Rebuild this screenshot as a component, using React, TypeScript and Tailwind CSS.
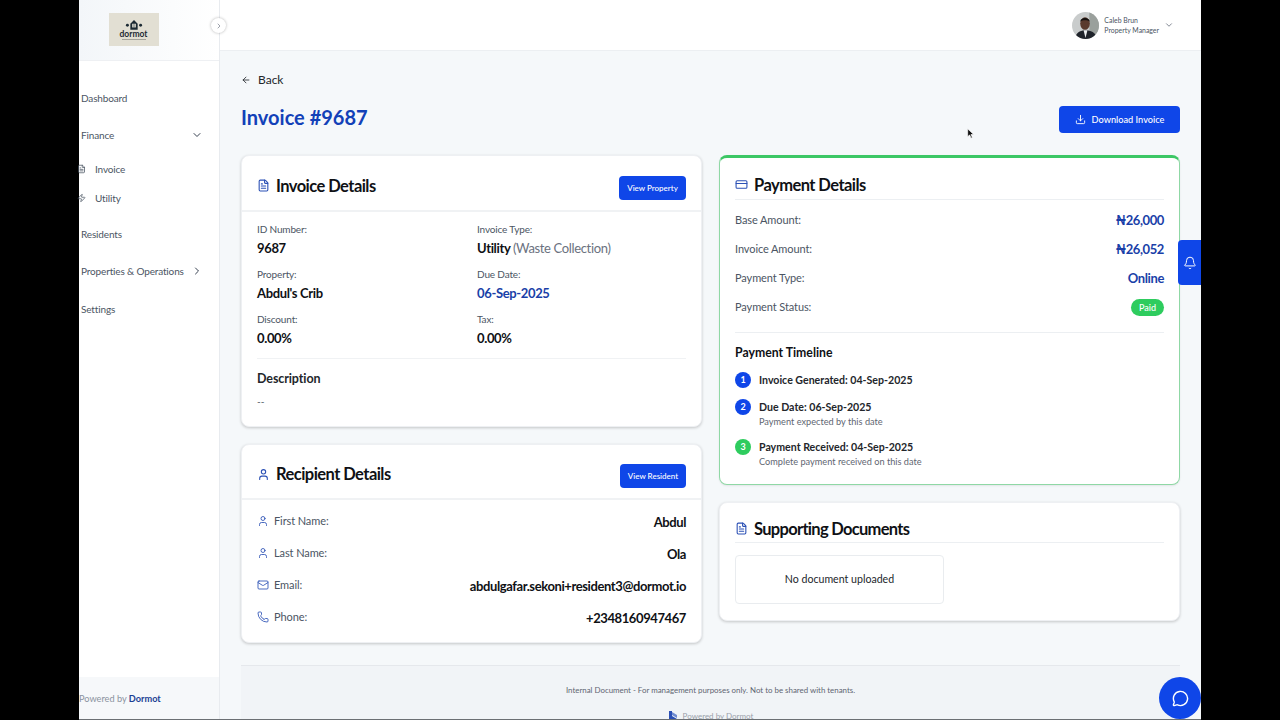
import React from "react";
import { ArrowLeft, Bell, ChevronDown, ChevronRight, CreditCard, Download, FileText, Mail, MessageCircle, Phone, User, Zap } from "lucide-react";

const titleClass = "text-[16.5px] leading-6 font-bold tracking-[-0.55px] text-[#0f1115]";

const NavItem: React.FC<{ label: string; chevron?: "down" | "right"; className?: string }> = ({ label, chevron, className }) => (
    <div className={`flex items-center justify-between pl-[2px] pr-[16px] text-[10px] tracking-[-0.15px] leading-4 text-[#4b5563] ${className ?? ""}`}>
        <span>{label}</span>
        {chevron === "down" && <ChevronDown className="w-3 h-3 text-[#374151]" />}
        {chevron === "right" && <ChevronRight className="w-3 h-3 text-[#374151]" />}
    </div>
);

const Sidebar = () => (
    <aside className="relative w-[141px] shrink-0 h-full bg-white border-r border-[#e8ebef] flex flex-col">
        <div className="h-[61px] shrink-0 flex justify-center pt-[13px] pr-[31px] bg-gradient-to-r from-[#f3f6f9] to-white border-b border-[#eef0f3]">
            <div className="w-[50px] h-[33px] bg-[#e2dfd3] flex flex-col items-center pt-[6px]">
                <svg viewBox="0 0 30 14" className="w-[22px] h-[11px]">
                    <path d="M10 6 L15 1 L20 6 V14 H10 Z" fill="#1c2a33" />
                    <rect x="12.5" y="6" width="5" height="5" fill="#e2dfd3" />
                    <rect x="14.6" y="6" width="0.8" height="5" fill="#1c2a33" />
                    <circle cx="6" cy="8" r="2" fill="#1c2a33" />
                    <circle cx="24" cy="8" r="2" fill="#1c2a33" />
                </svg>
                <span className="text-[8.5px] leading-[8px] font-bold text-[#1c2a33]">dormot</span>
                <span className="mt-[1px] w-[24px] h-[1px] bg-[#a5a49b]" />
            </div>
        </div>
        <button className="absolute left-[132px] top-[18px] w-[15px] h-[15px] rounded-full bg-white shadow-[0_0_3px_rgba(0,0,0,0.3)] flex items-center justify-center">
            <ChevronRight className="w-2 h-2 text-[#6b7280]" />
        </button>
        <nav className="flex flex-col pt-[29px]">
            <NavItem label="Dashboard" />
            <NavItem label="Finance" chevron="down" className="mt-[21px]" />
            <div className="mt-[18px] flex items-center gap-[9px] text-[10px] tracking-[-0.15px] leading-4 text-[#4b5563] -ml-[2px]">
                <FileText className="w-[9px] h-[10px]" />
                <span>Invoice</span>
            </div>
            <div className="mt-[13px] flex items-center gap-[9px] text-[10px] tracking-[-0.15px] leading-4 text-[#4b5563] -ml-[2px]">
                <Zap className="w-[9px] h-[10px]" />
                <span>Utility</span>
            </div>
            <NavItem label="Residents" className="mt-[20px]" />
            <NavItem label="Properties & Operations" chevron="right" className="mt-[21px]" />
            <NavItem label="Settings" className="mt-[22px]" />
        </nav>
        <div className="mt-auto h-[43px] bg-[#f6f8fa] flex items-center text-[9.2px] text-[#8b93a0]">
            Powered by&nbsp;<span className="font-bold text-[#1c3f94]">Dormot</span>
        </div>
    </aside>
);

const TopBar = () => (
    <header className="h-[51px] shrink-0 bg-white border-b border-[#eceff2] flex items-center justify-end pr-[27px]">
        <svg viewBox="0 0 28 28" className="w-[27px] h-[27px] rounded-full">
            <rect width="28" height="28" fill="#c9cccc" />
            <rect x="18" width="10" height="28" fill="#9aa09c" />
            <path d="M3 28 C4 21 9 19 14 19 C19 19 25 21 26 28 Z" fill="#20242b" />
            <path d="M12 19 L14 27 L16 19 Z" fill="#eef0f1" />
            <ellipse cx="13.5" cy="12" rx="5" ry="6.5" fill="#5a3a2c" />
            <path d="M8.5 10 C9 5 18 5 18.5 10 C16 8 11 8 8.5 10 Z" fill="#16110f" />
        </svg>
        <div className="ml-[5px] flex flex-col text-[6.9px] leading-[10px] text-[#4b5563]">
            <span>Caleb Brun</span>
            <span>Property Manager</span>
        </div>
        <ChevronDown className="ml-[5px] w-[10px] h-[10px] text-[#6b7280]" />
    </header>
);

const Field: React.FC<{ label: string; children: React.ReactNode }> = ({ label, children }) => (
    <div className="h-[45px]">
        <div className="text-[10px] tracking-[-0.15px] leading-[14px] text-[#4b5563]">{label}</div>
        <div className="mt-[3px] text-[13px] tracking-[-0.35px] leading-[18px] font-bold text-[#0f1115]">{children}</div>
    </div>
);

const InvoiceDetails = () => (
    <section className="h-[272px] bg-white rounded-lg border border-[#eef0f3] shadow-[0_1px_3px_rgba(0,0,0,0.2)]">
        <div className="h-[56px] flex items-center justify-between px-[15px] pt-[5px] border-b-2 border-[#f0f2f4]">
            <div className="flex items-center gap-[6px]">
                <FileText className="w-[13px] h-[13px] text-[#2b50b5]" />
                <h2 className={titleClass}>Invoice Details</h2>
            </div>
            <button className="mt-[4px] w-[67px] h-6 rounded bg-[#0f46e8] text-white text-[8px] font-medium">View Property</button>
        </div>
        <div className="px-[15px] pt-[10px]">
            <div className="grid grid-cols-[220px_1fr]">
                <Field label="ID Number:">9687</Field>
                <Field label="Invoice Type:">Utility <span className="font-normal text-[#6b7280]">(Waste Collection)</span></Field>
                <Field label="Property:">Abdul's Crib</Field>
                <Field label="Due Date:"><span className="text-[#1a3fa8]">06-Sep-2025</span></Field>
                <Field label="Discount:">0.00%</Field>
                <Field label="Tax:">0.00%</Field>
            </div>
            <div className="mt-[1px] border-t border-[#f0f2f4] pt-[11px]">
                <div className="text-[12.5px] tracking-[-0.1px] leading-[18px] font-bold text-[#23262b]">Description</div>
                <div className="mt-[5px] text-[10px] leading-4 text-[#4b5563]">--</div>
            </div>
        </div>
    </section>
);

const recipientRows = [
    { icon: User, label: "First Name:", value: "Abdul" },
    { icon: User, label: "Last Name:", value: "Ola" },
    { icon: Mail, label: "Email:", value: "abdulgafar.sekoni+resident3@dormot.io" },
    { icon: Phone, label: "Phone:", value: "+2348160947467" },
];

const RecipientDetails = () => (
    <section className="h-[199px] bg-white rounded-lg border border-[#eef0f3] shadow-[0_1px_3px_rgba(0,0,0,0.2)]">
        <div className="h-[55px] flex items-center justify-between px-[15px] pt-[5px] border-b-2 border-[#f0f2f4]">
            <div className="flex items-center gap-[6px]">
                <User className="w-[13px] h-[13px] text-[#2b50b5]" />
                <h2 className={titleClass}>Recipient Details</h2>
            </div>
            <button className="mt-[4px] w-[66px] h-6 rounded bg-[#0f46e8] text-white text-[8px] font-medium">View Resident</button>
        </div>
        <div className="px-[15px] pt-[6px]">
            {recipientRows.map(row => {
                const Icon = row.icon;
                return (
                    <div key={row.label} className="h-8 flex items-center justify-between">
                        <div className="flex items-center gap-[5px] text-[11px] tracking-[-0.1px] text-[#4b5563] -mt-[2px]">
                            <Icon className="w-3 h-3 text-[#2b50b5]" strokeWidth={1.7} />
                            <span>{row.label}</span>
                        </div>
                        <div className="mt-[2px] text-[13px] tracking-[-0.4px] font-bold text-[#0f1115]">{row.value}</div>
                    </div>
                );
            })}
        </div>
    </section>
);

const amountRows = [
    { label: "Base Amount:", value: "₦26,000" },
    { label: "Invoice Amount:", value: "₦26,052" },
    { label: "Payment Type:", value: "Online" },
];

const timeline = [
    { n: 1, title: "Invoice Generated: 04-Sep-2025", color: "bg-[#0f46e8]", gap: "h-[27px]" },
    { n: 2, title: "Due Date: 06-Sep-2025", sub: "Payment expected by this date", color: "bg-[#0f46e8]", gap: "h-[40px]" },
    { n: 3, title: "Payment Received: 04-Sep-2025", sub: "Complete payment received on this date", color: "bg-[#2ecc5e]", gap: "h-[40px]" },
];

const PaymentDetails = () => (
    <section className="h-[330px] bg-white rounded-lg border border-[#8fd8a5] border-t-[3px] border-t-[#3cc765] px-[15px] pt-[16px] shadow-[0_1px_2px_rgba(0,0,0,0.08)]">
        <div className="h-[26px] flex items-center gap-[6px] border-b border-[#eceff2] pb-[4px]">
            <CreditCard className="w-[13px] h-[13px] text-[#2b50b5]" />
            <h2 className={titleClass}>Payment Details</h2>
        </div>
        <div className="pt-[6px]">
            {amountRows.map(row => (
                <div key={row.label} className="h-[29px] flex items-center justify-between">
                    <span className="text-[11px] tracking-[-0.1px] text-[#4b5563]">{row.label}</span>
                    <span className="text-[13px] tracking-[-0.4px] font-bold text-[#1a3fa8]">{row.value}</span>
                </div>
            ))}
            <div className="h-[29px] flex items-center justify-between">
                <span className="text-[11px] tracking-[-0.1px] text-[#4b5563]">Payment Status:</span>
                <span className="w-[33px] h-[17px] rounded-full bg-[#2ecc5e] text-white text-[9px] font-medium flex items-center justify-center">Paid</span>
            </div>
        </div>
        <div className="mt-[10px] border-t border-[#eceff2] pt-[11px]">
            <div className="text-[12.25px] leading-[18px] font-bold text-[#0f1115]">Payment Timeline</div>
            <div className="mt-[10px] flex flex-col">
                {timeline.map(item => (
                    <div key={item.n} className={`${item.gap} flex gap-2`}>
                        <div className={`w-4 h-4 rounded-full ${item.color} text-white text-[9px] font-bold flex items-center justify-center`}>{item.n}</div>
                        <div className="flex flex-col">
                            <span className="text-[10.6px] leading-4 font-bold text-[#23262b]">{item.title}</span>
                            {item.sub && <span className="text-[9.2px] leading-[14px] text-[#5f6672]">{item.sub}</span>}
                        </div>
                    </div>
                ))}
            </div>
        </div>
    </section>
);

const SupportingDocuments = () => (
    <section className="h-[119px] bg-white rounded-lg border border-[#eef0f3] px-[15px] pt-[15px] shadow-[0_1px_3px_rgba(0,0,0,0.2)]">
        <div className="h-[25px] flex items-center gap-[6px] border-b border-[#eceff2] pb-[3px]">
            <FileText className="w-[13px] h-[13px] text-[#2b50b5]" />
            <h2 className="text-[16.5px] leading-6 font-bold tracking-[-0.7px] text-[#0f1115]">Supporting Documents</h2>
        </div>
        <div className="mt-[12px] w-[209px] h-[49px] rounded-sm border border-[#e9ecef] flex items-center justify-center text-[10.6px] text-[#23262b]">
            No document uploaded
        </div>
    </section>
);

export default function App() {
    return (
        <div className="relative w-[1280px] h-[720px] overflow-hidden bg-black px-[79px] font-['Lato','Liberation_Sans',sans-serif]">
            <div className="flex w-[1122px] h-full bg-[#f5f8fa]">
                <Sidebar />
                <div className="flex-1 min-w-0 flex flex-col">
                    <TopBar />
                    <main className="flex-1 min-h-0 px-[21px] pt-[21px]">
                        <div className="flex items-center gap-[7px] text-[12px] leading-4 text-[#23262b]">
                            <ArrowLeft className="w-[10px] h-[10px]" />
                            <span>Back</span>
                        </div>
                        <div className="mt-[13px] flex justify-between">
                            <h1 className="text-[20px] leading-8 font-bold text-[#1241b8]">Invoice #9687</h1>
                            <button className="mt-[5px] w-[121px] h-[27px] rounded bg-[#0f46e8] text-white text-[9.2px] font-medium flex items-center justify-center gap-[6px]">
                                <Download className="w-[11px] h-[11px]" />
                                Download Invoice
                            </button>
                        </div>
                        <div className="mt-[22px] grid grid-cols-2 gap-x-[17px] items-start">
                            <div className="flex flex-col gap-[17px]">
                                <InvoiceDetails />
                                <RecipientDetails />
                            </div>
                            <div className="flex flex-col gap-[17px]">
                                <PaymentDetails />
                                <SupportingDocuments />
                            </div>
                        </div>
                        <footer className="mt-[22px] h-[60px] border-t border-[#e5e8ec] bg-[#f1f4f7] flex flex-col items-center pt-[18px]">
                            <p className="text-[7.9px] leading-3 text-[#5f6672]">Internal Document - For management purposes only. Not to be shared with tenants.</p>
                            <div className="mt-[14px] flex items-center gap-[5px] text-[8px] leading-3 text-[#9aa1ab]">
                                <svg viewBox="0 0 10 10" className="w-[10px] h-[10px]">
                                    <path d="M1 0 H4 V5 L9 8 V10 H1 Z" fill="#2b50b5" />
                                    <path d="M4 1 L9 4 V7 L4 4 Z" fill="#6f8bd0" />
                                </svg>
                                Powered by Dormot
                            </div>
                        </footer>
                    </main>
                </div>
            </div>
            {/* floating overlays */}
            <div className="absolute left-[1178px] top-[240px] w-[23px] h-[45px] bg-[#0f46e8] rounded-l flex items-center justify-center">
                <Bell className="w-[14px] h-[14px] text-white" strokeWidth={1.7} />
            </div>
            <div className="absolute left-[1159px] top-[677px] w-[42px] h-[42px] rounded-full bg-[#0f46e8] flex items-center justify-center">
                <MessageCircle className="w-[17px] h-[17px] text-white" />
            </div>
            <svg viewBox="0 0 12 16" className="absolute left-[967px] top-[127px] w-[8px] h-[13px]">
                <path d="M1 1 L1 13 L4 10 L6 15 L8 14 L6 9.5 L10 9.5 Z" fill="#111" stroke="#fff" strokeWidth="1" />
            </svg>
            <div className="absolute left-[79px] bottom-0 w-[1122px] h-[1px] bg-[#6b6f73]" />
        </div>
    );
}
